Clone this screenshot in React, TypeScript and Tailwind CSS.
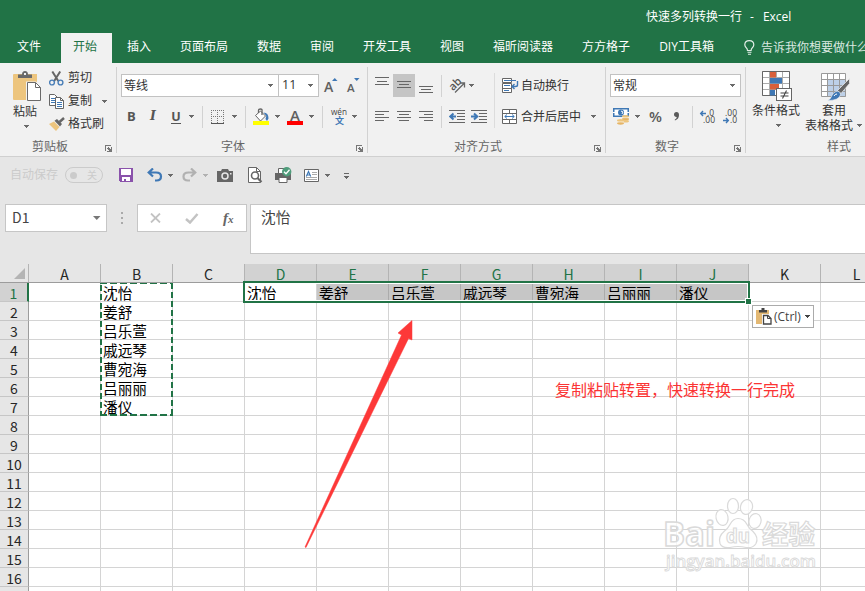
import React from "react";

const UI = "font-['Open_Sans','Noto_Sans_CJK_SC',sans-serif]";
const SHEET = "font-['Noto_Sans_CJK_SC',sans-serif]";

function Caret({ className = "", color = "#6a6a6a" }: { className?: string; color?: string }) {
  return (
    <svg className={"shrink-0 " + className} width="5" height="3" viewBox="0 0 5 3" shapeRendering="crispEdges">
      <path d="M0 0h5v1h-1v1h-1v1h-1v-1h-1v-1h-1z" fill={color} />
    </svg>
  );
}

function Sep({ className = "" }: { className?: string }) {
  return <div className={"h-[22px] w-px shrink-0 bg-[#d2d2d2] " + className} />;
}

function GroupLabel({ text, launcher = true, className = "" }: { text: string; launcher?: boolean; className?: string }) {
  return (
    <div className="flex h-[18px] shrink-0 items-center text-[12px] leading-[18px] text-[#666]">
      <span className={"mt-[2px] whitespace-nowrap " + className}>{text}</span>
      {launcher && (
        <svg className="mt-[4px] mr-[3px] ml-auto shrink-0" width="8" height="7" viewBox="0 0 8 7" shapeRendering="crispEdges">
          <path d="M0.5 6V.5H6" fill="none" stroke="#777" />
          <path d="M3 2h1v1h1v1h1v-2h1v5h-5v-1h2v-1h-1v-1h-1v-1h1z" fill="#777" />
        </svg>
      )}
    </div>
  );
}

function Lines({ rows, className = "" }: { rows: [number, number, number][]; className?: string }) {
  return (
    <svg className={"shrink-0 " + className} width="14" height="18" viewBox="0 0 14 18" shapeRendering="crispEdges">
      {rows.map(([x, y, w]) => (
        <rect key={y} x={x} y={y} width={w} height="1" fill="#666" />
      ))}
    </svg>
  );
}

function PasteIcon() {
  return (
    <svg className="shrink-0" width="29" height="31" viewBox="0 0 29 31">
      <path d="M1 3h23v26H1a1 1 0 0 1-1-1V4a1 1 0 0 1 1-1z" fill="#edc57e" />
      <path d="M5 7V3.500h4c0-2 1-3.500 3-3.500s3 1.500 3 3.500h4V7z" fill="#6a6a6a" />
      <rect x="11" y="2" width="2" height="2" fill="#f1f1f1" />
      <path d="M13 10.500h10l5.500 5.500v14H13z" fill="#f1f1f1" />
      <path d="M14.500 11.500h8l5 5v13h-13z" fill="#fff" stroke="#6a6a6a" />
      <path d="M22.500 11.500v5h5" fill="none" stroke="#6a6a6a" />
    </svg>
  );
}

function CutIcon() {
  return (
    <svg className="shrink-0" width="15" height="15" viewBox="0 0 15 15">
      <path d="M3.300.5l6 9.500M11.200.5l-6 9.500" stroke="#666" strokeWidth="2" fill="none" />
      <circle cx="3" cy="11.500" r="2.400" fill="none" stroke="#4a7fb8" strokeWidth="1.400" />
      <circle cx="11.500" cy="11.500" r="2.400" fill="none" stroke="#4a7fb8" strokeWidth="1.400" />
    </svg>
  );
}

function CopyIcon() {
  return (
    <svg className="shrink-0" width="15" height="15" viewBox="0 0 15 15">
      <path d="M.5.5h5l3 3v8h-8z" fill="#fff" stroke="#666" />
      <path d="M2 4.500h4M2 6.500h4M2 8.500h4" stroke="#3f78b5" />
      <path d="M6.500 3.500h5l3 3v8h-8z" fill="#fff" stroke="#666" />
      <path d="M11.500 3.500v3h3" fill="none" stroke="#666" />
      <path d="M8 8.500h5M8 10.500h5M8 12.500h5" stroke="#3f78b5" />
    </svg>
  );
}

function BrushIcon() {
  return (
    <svg className="shrink-0" width="16" height="15" viewBox="0 0 16 15">
      <path d="M0 7l5-2.500 5.500 5.500L7 14z" fill="#edc57e" />
      <path d="M5.500 3.800L8 2l5 5-2 2.600z" fill="#666" />
      <path d="M10.500 5l4.500-4" stroke="#666" strokeWidth="2.500" />
    </svg>
  );
}

function GrowFont({ small = false }: { small?: boolean }) {
  return (
    <svg className="shrink-0 overflow-visible" width="15" height="18" viewBox="0 0 15 18" fontFamily="Open Sans">
      <text x="0" y="14.500" fontSize={small ? 11.500 : 14} fontWeight="600" fill="#606060">A</text>
      <path d={small ? "M7 1h5.500l-2.750 3z" : "M8 4h5.500l-2.750-3z"} fill="#3f78b5" />
    </svg>
  );
}

function FontGroup() {
  return (
    <section className="flex h-[86px] w-[251px] shrink-0 flex-col border-r border-[#d2d2d2]">
      <div className="mt-[7px] flex h-[23px] shrink-0 items-center pl-[4px]">
        <div className="flex h-[23px] w-[158px] shrink-0 items-center justify-between border border-[#c2c2c2] bg-white pr-[5px] pl-[2px] text-[12px] text-[#333]">
          <span>等线</span>
          <Caret />
        </div>
        <div className="-ml-px flex h-[23px] w-[41px] shrink-0 items-center justify-between border border-[#c2c2c2] bg-white pr-[5px] pl-[3px] text-[12.500px] text-[#333]">
          <span>11</span>
          <Caret />
        </div>
        <div className="ml-[5px]"><GrowFont /></div>
        <div className="ml-[8px]"><GrowFont small /></div>
      </div>
      <div className="mt-[8px] flex h-[23px] shrink-0 items-center pl-[10px] text-[#555]">
        <span className="w-[12px] shrink-0 text-[13px] leading-[21px] font-bold">B</span>
        <span className="ml-[11px] w-[10px] shrink-0 font-['DejaVu_Serif'] text-[12.500px] font-bold italic">I</span>
        <span className="ml-[11px] w-[10px] shrink-0 border-b border-[#555] text-center text-[12.500px] leading-[13px] font-bold">U</span>
        <Caret className="ml-[8px]" />
        <Sep className="ml-[8px]" />
        <svg className="ml-[8px] shrink-0" width="14" height="14" viewBox="0 0 14 14" shapeRendering="crispEdges">
          <path d="M0 .5h13M0 6.500h13M.5 0v13M6.500 0v13M12.500 0v13" stroke="#777" strokeDasharray="1 1" />
          <path d="M0 13.500h13" stroke="#555" strokeWidth="1" />
        </svg>
        <Caret className="ml-[7px]" />
        <Sep className="ml-[8px]" />
        <svg className="ml-[7px] shrink-0" width="17" height="18" viewBox="0 0 17 18">
          <path d="M10.500 4.500q5 0 5 6l-1.500 2.500-1.500-2 .8-3z" fill="#3f78b5" />
          <path d="M2.500 7.500L7.500 3l5 5L7.500 13z" fill="#fff" stroke="#666" />
          <path d="M5.500 5V2.500q0-1.500 2-1.500t1.500 2v4" fill="none" stroke="#666" strokeWidth="1.300" />
          <rect x="0" y="13" width="16" height="4" fill="#ffff00" />
        </svg>
        <Caret className="ml-[5px]" />
        <svg className="ml-[7px] shrink-0 overflow-visible" width="16" height="18" viewBox="0 0 16 18">
          <text x="3" y="12.500" fontFamily="Open Sans" fontSize="15" fontWeight="600" fill="#606060">A</text>
          <rect x="0" y="13" width="16" height="4" fill="#f00" />
        </svg>
        <Caret className="ml-[6px]" />
        <Sep className="ml-[8px]" />
        <svg className="ml-[8px] shrink-0 overflow-visible" width="16" height="19" viewBox="0 0 16 19">
          <text x="0" y="8" fontFamily="Open Sans" fontSize="9.500" textLength="16" lengthAdjust="spacingAndGlyphs" fill="#444">wén</text>
          <text x="4" y="17" fontFamily="Noto Sans CJK SC" fontSize="9" fontWeight="700" fill="#3f78b5">文</text>
        </svg>
        <Caret className="ml-[5px]" />
      </div>
      <div className="mt-[9px]"><GroupLabel text="字体" className="ml-[104px]" /></div>
    </section>
  );
}

function Indent({ out = false, className = "" }: { out?: boolean; className?: string }) {
  return (
    <svg className={"shrink-0 " + className} width="17" height="14" viewBox="0 0 17 14">
      <path d="M0 .5h16M8 3.500h8M8 6.500h8M8 9.500h8M0 12.500h16" stroke="#666" />
      <path d={out ? "M7 6.500H2M4.500 3.500L1.200 6.500l3.300 3" : "M0 6.500h5.500M3 3.500l3.300 3-3.300 3"} fill="none" stroke="#3f78b5" strokeWidth="2" />
    </svg>
  );
}

function AlignGroup() {
  return (
    <section className="flex h-[86px] w-[238px] shrink-0 flex-col border-r border-[#d2d2d2]">
      <div className="flex shrink-0">
        <div className="flex w-[126px] shrink-0 flex-col">
          <div className="mt-[7px] flex h-[23px] items-center pl-[7px]">
            <Lines rows={[[0, 0, 14], [2, 4, 10], [0, 7, 14]]} />
            <div className="ml-[4px] flex h-[23px] w-[22px] shrink-0 items-center justify-center bg-[#c5c5c5]">
              <Lines rows={[[0, 4, 14], [2, 7, 10], [0, 10, 14]]} />
            </div>
            <Lines className="ml-[4px]" rows={[[0, 9, 14], [2, 12, 10], [0, 15, 14]]} />
            <Sep className="ml-[8px]" />
            <svg className="ml-[7px] shrink-0 overflow-visible" width="17" height="17" viewBox="0 0 17 17">
              <text x="0" y="11" transform="rotate(-45 6 8)" fontFamily="Open Sans" fontSize="11" fontWeight="600" fill="#555">ab</text>
              <path d="M6 15.500L15 6.500M11 6h4.500v4.500" fill="none" stroke="#666" strokeWidth="1.300" />
            </svg>
            <Caret className="ml-[3px]" />
          </div>
          <div className="mt-[8px] flex h-[23px] items-center pl-[7px]">
            <Lines rows={[[0, 3, 14], [0, 6, 9], [0, 9, 14], [0, 12, 9]]} />
            <Lines className="ml-[8px]" rows={[[0, 3, 14], [2, 6, 10], [0, 9, 14], [2, 12, 10]]} />
            <Lines className="ml-[8px]" rows={[[0, 3, 14], [5, 6, 9], [0, 9, 14], [5, 12, 9]]} />
            <Sep className="ml-[8px]" />
            <Indent className="ml-[7px]" out />
            <Indent className="ml-[5px]" />
          </div>
        </div>
        <div className="mt-[6px] h-[55px] w-px shrink-0 bg-[#dcdcdc]" />
        <div className="flex flex-col text-[12px] text-[#333]">
          <div className="mt-[7px] flex h-[23px] items-center pl-[7px]">
            <svg className="shrink-0" width="17" height="16" viewBox="0 0 17 16">
              <path d="M.5.5h9v4h-9zM.5 5.500h9v9h-9zM.5 10.500h9" fill="#fff" stroke="#666" />
              <path d="M2 2.500h12M2 7.500h6M2 12.500h5" stroke="#3f78b5" strokeWidth="1.100" />
              <path d="M15.500 3v4q0 1.500-2 1.500H10M12.500 6L10 8.500l2.500 2.500" fill="none" stroke="#3f78b5" strokeWidth="1.400" />
            </svg>
            <span className="ml-[2px] whitespace-nowrap">自动换行</span>
          </div>
          <div className="mt-[8px] flex h-[23px] items-center pl-[7px]">
            <svg className="shrink-0" width="16" height="16" viewBox="0 0 16 16">
              <path d="M.5.500h14v14h-14zM.5 4.500h14M.5 10.500h14M7.500.5v4M7.500 10.500v4" fill="#fff" stroke="#666" />
              <path d="M3 7.500h9M5 5.500l-2.300 2 2.300 2M10 5.500l2.300 2-2.300 2" fill="none" stroke="#3f78b5" />
            </svg>
            <span className="ml-[3px] whitespace-nowrap">合并后居中</span>
            <Caret className="ml-[10px]" />
          </div>
        </div>
      </div>
      <div className="mt-[9px]"><GroupLabel text="对齐方式" className="ml-[86px]" /></div>
    </section>
  );
}

function DecimalIcon({ inc }: { inc: boolean }) {
  return (
    <svg className="shrink-0 overflow-visible" width="16" height="14" viewBox="0 0 16 14" fontFamily="Open Sans" fontSize="8.500" fill="#444">
      <text x={inc ? 7 : 3} y="6" textLength={inc ? 7 : 12}>{inc ? ".0" : ".00"}</text>
      <text x={inc ? 3 : 8} y="13" textLength={inc ? 12 : 7}>{inc ? ".00" : ".0"}</text>
      <path d={inc ? "M6 3.500H1M3 1L.7 3.500 3 6" : "M1 10.500h5M4 8l2.300 2.500L4 13"} fill="none" stroke="#3f78b5" strokeWidth="1.400" />
    </svg>
  );
}

function NumberGroup() {
  return (
    <section className="flex h-[86px] w-[140px] shrink-0 flex-col border-r border-[#d2d2d2]">
      <div className="mt-[7px] ml-[4px] flex h-[23px] w-[131px] shrink-0 items-center justify-between border border-[#c2c2c2] bg-white pr-[5px] pl-[2px] text-[12px] text-[#333]">
        <span>常规</span>
        <Caret />
      </div>
      <div className="mt-[8px] flex h-[23px] shrink-0 items-center pl-[7px]">
        <svg className="shrink-0" width="17" height="17" viewBox="0 0 17 17">
          <rect x="0" y="0" width="16" height="9" fill="#3f78b5" />
          <rect x="1.500" y="1.500" width="13" height="6" fill="#fff" />
          <circle cx="8" cy="4.500" r="3" fill="#3f78b5" />
          <path d="M0 4.500h2M14 4.500h2M8 3l2 1-1 2" stroke="#fff" fill="none" />
          <ellipse cx="12.500" cy="8.500" rx="3.500" ry="1.500" fill="#edc57e" />
          <ellipse cx="12.500" cy="11" rx="3.500" ry="1.500" fill="#e6b566" />
          <ellipse cx="12.500" cy="13.300" rx="3.500" ry="1.200" fill="#edc57e" />
          <ellipse cx="7.500" cy="12.500" rx="3.500" ry="1.500" fill="#edc57e" />
          <ellipse cx="7.500" cy="15.300" rx="3.500" ry="1.400" fill="#e6b566" />
          <path d="M9 9.700h7M4 13.900h7" stroke="#fff" strokeWidth=".6" />
        </svg>
        <Caret className="ml-[5px]" />
        <span className="ml-[9px] w-[15px] shrink-0 text-[15px] leading-none font-semibold text-[#5a5a5a]">%</span>
        <svg className="ml-[10px] shrink-0" width="6" height="9" viewBox="0 0 6 9">
          <path d="M2.500 0q2.500 0 2.500 3 0 4-4 5.500l-.3-.8q2-1 2.100-2.800Q0 5 0 2.500 0 0 2.500 0z" fill="#5a5a5a" />
        </svg>
        <Sep className="ml-[12px]" />
        <div className="ml-[7px]"><DecimalIcon inc /></div>
        <div className="ml-[6px]"><DecimalIcon inc={false} /></div>
      </div>
      <div className="mt-[9px]"><GroupLabel text="数字" className="ml-[49px]" /></div>
    </section>
  );
}

function StyleGroup() {
  return (
    <section className="flex h-[86px] w-[160px] shrink-0 flex-col text-[12px] leading-[15px] text-[#333]">
      <div className="flex h-[68px] shrink-0 pl-[6px]">
        <div className="flex w-[48px] shrink-0 flex-col items-center whitespace-nowrap">
          <svg className="mt-[4px] ml-[3px] shrink-0" width="31" height="31" viewBox="0 0 31 31">
            <path d="M.5.5h27v24H.5zM.5 6.500h27M.5 12.500h27M.5 18.500h27M7.500.5v24M20.500.5v24M14.500.5v24" fill="#fff" stroke="#ababab" />
            <path d="M.5.5h27v24H.5z" fill="none" stroke="#666" />
            <path d="M8 1h6v5.500H8zM8 13h9v5.500H8z" fill="#d9603b" />
            <path d="M8 7h12v5.500H8zM8 19h5v5.500H8z" fill="#3f78b5" />
            <rect x="14.500" y="17.500" width="15" height="12" fill="#fff" stroke="#666" />
            <path d="M18.500 22h8M18.500 25h8M24.500 19.500l-4 8" stroke="#444" strokeWidth="1.100" />
          </svg>
          <span className="mt-[1px]">条件格式</span>
          <Caret className="mt-[6px] ml-[4px]" />
        </div>
        <div className="ml-[5px] flex flex-col whitespace-nowrap">
          <svg className="mt-[6px] ml-[16px] shrink-0" width="30" height="29" viewBox="0 0 30 29">
            <path d="M.5.5h24v23H.5z" fill="#fff" />
            <path d="M7 6h18v18H7z" fill="#bdd0e8" />
            <path d="M.5.5h24v23H.5zM.5 6.500h24M.5 12.500h24M.5 18.500h24M6.500.5v23M12.500.5v23M18.500.5v23" fill="none" stroke="#999" />
            <path d="M28.500 5.500v5L20 20.500l-3.500-3z" fill="#666" stroke="#f1f1f1" strokeWidth=".7" />
            <path d="M15 18.500q4-1 4.500 3-1 6-13 6 3.500-1.500 4.500-5 1-3 4-4z" fill="#3f78b5" stroke="#f1f1f1" strokeWidth=".6" />
            <path d="M13 23q1-2 3-2" stroke="#fff" fill="none" />
          </svg>
          <span className="mt-[1px] ml-[17px]">套用</span>
          <div className="flex items-center">
            <span>表格格式</span>
            <Caret className="ml-[4px]" />
          </div>
        </div>
      </div>
      <div className="mt-[2px]"><GroupLabel text="样式" launcher={false} className="ml-[81px]" /></div>
    </section>
  );
}

function Ribbon() {
  return (
    <div className="flex h-[94px] shrink-0 items-start overflow-hidden border-b border-[#d0d0d0] bg-[#f1f1f1] pt-[4px]">
      <section className="flex h-[86px] w-[117px] shrink-0 flex-col border-r border-[#d2d2d2] text-[12px] text-[#333]">
        <div className="flex h-[70px] shrink-0">
          <div className="flex w-[49px] shrink-0 flex-col pt-[4px] pl-[13px]">
            <PasteIcon />
            <span className="mt-[1px] leading-[18px]">粘贴</span>
            <Caret className="mt-[4px] ml-[11px]" />
          </div>
          <div className="flex flex-col">
            <div className="flex h-[22px] items-center gap-[4px]"><CutIcon /><span>剪切</span></div>
            <div className="mt-[1px] flex h-[22px] items-center gap-[4px]"><CopyIcon /><span>复制</span><Caret className="ml-[6px]" /></div>
            <div className="mt-[1px] flex h-[22px] items-center gap-[3px]"><BrushIcon /><span>格式刷</span></div>
          </div>
        </div>
        <GroupLabel text="剪贴板" className="ml-[32px]" />
      </section>
      <FontGroup />
      <AlignGroup />
      <NumberGroup />
      <StyleGroup />
    </div>
  );
}

function TitleBar() {
  const tabs = ["插入", "页面布局", "数据", "审阅", "开发工具", "视图", "福昕阅读器", "方方格子", "DIY工具箱"];
  return (
    <header className="h-[63px] shrink-0 overflow-hidden bg-[#217346] text-[12px] whitespace-nowrap text-white">
      <div className="flex h-[33px] items-center pl-[646px] leading-[30px]">
        <span>快速多列转换一行</span>
        <span className="ml-[8px]">-</span>
        <span className="ml-[9px]">Excel</span>
      </div>
      <div className="flex h-[30px] items-center leading-[28px]">
        <span className="h-[30px] w-[61px] shrink-0 pl-[17px]">文件</span>
        <span className="h-[30px] w-[51px] shrink-0 bg-[#f1f1f1] pl-[12px] text-[#217346]">开始</span>
        <nav className="flex h-[30px] shrink-0 gap-[29px] pl-[15px]">
          {tabs.map((t) => <span key={t}>{t}</span>)}
        </nav>
        <svg className="mb-[2px] ml-[30px] shrink-0" width="11" height="15" viewBox="0 0 11 15">
          <path d="M3.500 10.500q0-1.500-1.300-2.800Q.8 6.500.8 4.800.8.7 5.300.7t4.500 4.100q0 1.700-1.400 2.900-1.300 1.300-1.300 2.800z" fill="none" stroke="#e3eee8" strokeWidth="1.200" />
          <path d="M3.500 12.300h4M4 14.300h3" stroke="#e3eee8" strokeWidth="1.100" />
        </svg>
        <span className="ml-[6px] h-[28px] shrink-0 text-[#dbe9e1]">告诉我你想要做什么</span>
      </div>
    </header>
  );
}

function QuickAccess() {
  return (
    <div className="flex h-[36px] shrink-0 items-center pl-[10px] text-[12px] text-[#cbcbcb]">
      <span className="w-[48px] whitespace-nowrap">自动保存</span>
      <div className="ml-[7px] flex h-[16px] w-[38px] items-center justify-between rounded-full border border-[#cbcbcb] pr-[5px] pl-[4px] text-[10px] leading-none">
        <span className="size-[7px] rounded-full bg-[#cbcbcb]" />
        <span>关</span>
      </div>
      <svg className="ml-[16px]" width="14" height="14" viewBox="0 0 14 14" shapeRendering="crispEdges">
        <path d="M0 0h14v14H1l-1-1z" fill="#8a52ab" />
        <path d="M2 1h10v6H2zM3 9h8v4H3z" fill="#fff" />
        <rect x="5" y="11" width="2" height="3" fill="#8a52ab" />
      </svg>
      <svg className="ml-[14px]" width="16" height="14" viewBox="0 0 16 14">
        <path d="M2 4.500h7q5 0 5 4t-4.500 4H8M6 .5l-4.300 4 4.300 4" fill="none" stroke="#3f78b5" strokeWidth="2.200" />
      </svg>
      <Caret className="ml-[5px]" />
      <svg className="ml-[9px]" width="16" height="14" viewBox="0 0 16 14">
        <path d="M13 4.500H6.500q-5 0-5 4t4.500 4H8M9 .5l4.300 4-4.300 4" fill="none" stroke="#b1b1b1" strokeWidth="2.200" />
      </svg>
      <Caret className="ml-[5px]" color="#b1b1b1" />
      <svg className="ml-[9px]" width="16" height="13" viewBox="0 0 16 13">
        <path d="M0 2h4l1-2h6l1 2h4v11H0z" fill="#666" />
        <circle cx="8" cy="7" r="3" fill="none" stroke="#e6e6e6" strokeWidth="1.500" />
        <rect x="13" y="4" width="1.500" height="1.500" fill="#e6e6e6" />
      </svg>
      <svg className="ml-[15px]" width="15" height="16" viewBox="0 0 15 16">
        <path d="M.5.5h8l4 4v11H.5z" fill="#fff" stroke="#666" />
        <path d="M8.500.5v4h4" fill="none" stroke="#666" />
        <circle cx="7" cy="8.500" r="3.500" fill="#fff" stroke="#666" strokeWidth="1.600" />
        <path d="M9.500 11l4 4" stroke="#666" strokeWidth="2.200" />
      </svg>
      <svg className="ml-[12px]" width="17" height="16" viewBox="0 0 17 16">
        <path d="M3.500 1.500h6v5h-6z" fill="#fff" stroke="#666" />
        <path d="M0 6h16v7H0z" fill="#666" />
        <path d="M4 10.500h8v5H4z" fill="#fff" stroke="#666" />
        <circle cx="11.700" cy="4.700" r="4.700" fill="#4f9c7b" />
        <path d="M9 4.700l2 2 3.500-4" fill="none" stroke="#fff" strokeWidth="1.300" />
      </svg>
      <svg className="ml-[12px]" width="16" height="13" viewBox="0 0 16 13">
        <path d="M.5.5h14v12H.5z" fill="#fff" stroke="#666" />
        <path d="M8 3.500h5M8 5.500h5M2 8.500h11M2 10.500h11" stroke="#aaa" />
        <path d="M2.300 7.500L4.500 2.500l2.200 5M3 6h3" fill="none" stroke="#3f78b5" strokeWidth="1.200" />
      </svg>
      <Caret className="ml-[5px]" />
      <svg className="mt-[2px] ml-[14px]" width="5" height="6" viewBox="0 0 5 6" shapeRendering="crispEdges">
        <path d="M0 0h5v1H0zM0 3h5v1h-1v1h-1v1h-1v-1h-1v-1h-1z" fill="#666" />
      </svg>
    </div>
  );
}

function FormulaBar() {
  return (
    <div className="mt-[11px] flex h-[50px] shrink-0 items-start pl-[5px]">
      <div className="flex h-[28px] w-[102px] items-center justify-between border border-[#c6c6c6] bg-white pr-[5px] pl-[6px] text-[14px] leading-[24px] text-[#444]">
        <span className={"h-[26px] " + SHEET}>D1</span>
        <svg width="8" height="4" viewBox="0 0 8 4"><path d="M0 0h7.500L3.750 4z" fill="#777" /></svg>
      </div>
      <div className="mt-[8px] ml-[14px] flex w-[2px] flex-col gap-[3px]">
        <i className="size-[2px] bg-[#aaa]" /><i className="size-[2px] bg-[#aaa]" /><i className="size-[2px] bg-[#aaa]" />
      </div>
      <div className="ml-[14px] flex h-[28px] w-[110px] items-center border border-[#c6c6c6] bg-white pl-[12px]">
        <svg width="11" height="10" viewBox="0 0 11 10"><path d="M1 .5l9 9M10 .5l-9 9" stroke="#c3c3c3" strokeWidth="1.800" /></svg>
        <svg className="ml-[24px]" width="14" height="11" viewBox="0 0 14 11"><path d="M1 6l4 3.500L12.500 1" fill="none" stroke="#c3c3c3" strokeWidth="2.500" /></svg>
        <span className="ml-[24px] font-['Liberation_Serif'] text-[15px] leading-none font-bold text-[#666] italic">f<span className="text-[11px]">x</span></span>
      </div>
      <div className={"ml-[3px] h-[50px] flex-1 border border-r-0 border-[#c6c6c6] bg-white pl-[10px] text-[14.667px] leading-[23px] text-[#444] " + SHEET}>沈怡</div>
    </div>
  );
}

const names = ["沈怡", "姜舒", "吕乐萱", "戚远琴", "曹宛海", "吕丽丽", "潘仪"];
const columns = ["A", "B", "C", "D", "E", "F", "G", "H", "I", "J", "K", "L"];

function cellText(row: number, col: number) {
  if (col === 1 && row < 7) return names[row];
  if (row === 0 && col >= 3 && col <= 9) return names[col - 3];
  return "";
}

function Sheet() {
  return (
    <div className={"relative mt-[10px] w-[865px] flex-1 overflow-hidden bg-white text-[14.667px] text-black " + SHEET}>
      <div className="flex h-[19px] w-[893px] border-b border-[#9c9c9c] bg-[#e6e6e6] text-[14px] text-[#262626]">
        <div className="flex h-[18px] w-[29px] items-end justify-end border-r border-[#b4b4b4] pr-[3px] pb-[3px]">
          <svg width="11" height="11" viewBox="0 0 11 11"><path d="M11 0v11H0z" fill="#b4b4b4" /></svg>
        </div>
        {columns.map((c, i) => (
          <div
            key={c}
            className={
              "h-[18px] w-[72px] border-r border-[#b4b4b4] text-center leading-[21px] " +
              (i >= 3 && i <= 9 ? "bg-[#d2d2d2] text-[#217346]" : "")
            }
          >
            {c}
          </div>
        ))}
      </div>
      {Array.from({ length: 17 }, (_, r) => (
        <div key={r} className="flex h-[19px] w-[893px]">
          <div
            className={
              "h-[19px] w-[29px] border-b border-b-[#c6c6c6] text-center text-[14px] leading-[20px] " +
              (r === 0 ? "border-r-2 border-r-[#217346] bg-[#d2d2d2] text-[#217346]" : "border-r border-r-[#9c9c9c] bg-[#e6e6e6] text-[#262626]")
            }
          >
            {r < 16 ? r + 1 : ""}
          </div>
          {columns.map((c, i) => (
            <div
              key={c}
              className={
                "h-[19px] w-[72px] border-r border-b pl-[2px] leading-[19px] whitespace-nowrap " +
                (r === 0 && i >= 4 && i <= 9 ? "border-[#ababab] bg-[#c6c6c6]" : "border-[#d4d4d4]")
              }
            >
              {cellText(r, i)}
            </div>
          ))}
        </div>
      ))}

      <div className="absolute top-[17px] left-[243px] h-[22px] w-[507px] border-2 border-[#217346]">
        <div className="h-[18px] w-[503px] border border-white" />
      </div>
      <div className="absolute top-[34px] left-[745px] size-[7px] border border-white bg-[#217346]" />

      <svg className="absolute top-[19px] left-[100px]" width="73" height="133" viewBox="0 0 73 133" shapeRendering="crispEdges">
        <path d="M1 2v130M72 0v133" stroke="#217346" strokeWidth="2" strokeDasharray="6 3" />
        <path d="M0 .5h73" stroke="#217346" strokeWidth="1" strokeDasharray="7 3" />
        <path d="M0 132h73" stroke="#217346" strokeWidth="2" strokeDasharray="7 3" />
      </svg>

      <div className={"absolute top-[41px] left-[752px] flex h-[23px] w-[62px] items-center border border-[#ababab] bg-white pl-[3px] text-[12px] text-[#444] " + UI}>
        <svg className="shrink-0" width="16" height="17" viewBox="0 0 16 17">
          <path d="M0 2h13v14H0z" fill="#e3b873" />
          <path d="M3 4.500V2h2.500V0h3v2H11v2.500z" fill="#444" />
          <path d="M6 6h6.500l3.500 3.500V17H6z" fill="#fff" />
          <path d="M7.500 7.500h4.500l3 3v5.500h-7.500z" fill="#fff" stroke="#444" strokeWidth="1.300" />
          <path d="M11.500 7.500v3h3.500" fill="none" stroke="#444" />
        </svg>
        <span className="ml-[2px]">(Ctrl)</span>
        <Caret className="ml-[4px]" color="#444" />
      </div>

      <svg className="absolute top-[56px] left-[304px]" width="110" height="229" viewBox="304 320 110 229">
        <path d="M412 320.500L412 340L408.500 338.500L306 547.500L305 547L401.500 335L398 333z" fill="#fd3838" stroke="#fd3838" strokeWidth=".5" />
      </svg>

      <div className="absolute top-[113px] left-[555px] text-[16px] leading-[24px] whitespace-nowrap text-[#fb3434]">
        复制粘贴转置，快速转换一行完成
      </div>

      <svg className="absolute top-[232px] left-[660px]" width="162" height="80" viewBox="660 496 162 80" fill="#fff" fillOpacity=".8" stroke="#dadada" strokeWidth="1.200" fontFamily="Open Sans, Noto Sans CJK SC, sans-serif" fontWeight="700">
        <ellipse cx="733" cy="506" rx="5.500" ry="7.500" />
        <ellipse cx="746.500" cy="507" rx="6" ry="7.500" transform="rotate(12 746.500 507)" />
        <ellipse cx="722" cy="517.500" rx="6" ry="8" transform="rotate(-12 722 517.500)" />
        <ellipse cx="755" cy="521" rx="6" ry="7.500" transform="rotate(15 755 521)" />
        <path d="M738 518.500q6 0 9 6 2 4 6 7 6 6 3 12-3 5-10 4-8-2-16 0-8 1-10-4-2-7 4-12 4-3 6-7 3-6 8-6z" />
        <text x="663" y="546" fontSize="34" textLength="52" lengthAdjust="spacingAndGlyphs" strokeWidth="1.600">Bai</text>
        <text x="726" y="543" fontSize="20" textLength="24" lengthAdjust="spacingAndGlyphs">du</text>
        <text x="762" y="544" fontSize="26" textLength="53" lengthAdjust="spacingAndGlyphs">经验</text>
        <text x="666" y="567" fontSize="17" fontWeight="600" textLength="150" lengthAdjust="spacingAndGlyphs" strokeWidth=".9">jingyan.baidu.com</text>
      </svg>
    </div>
  );
}

export default function App() {
  return (
    <div className={"flex h-[591px] w-[865px] flex-col overflow-hidden bg-[#e6e6e6] " + UI}>
      <TitleBar />
      <Ribbon />
      <QuickAccess />
      <FormulaBar />
      <Sheet />
    </div>
  );
}
